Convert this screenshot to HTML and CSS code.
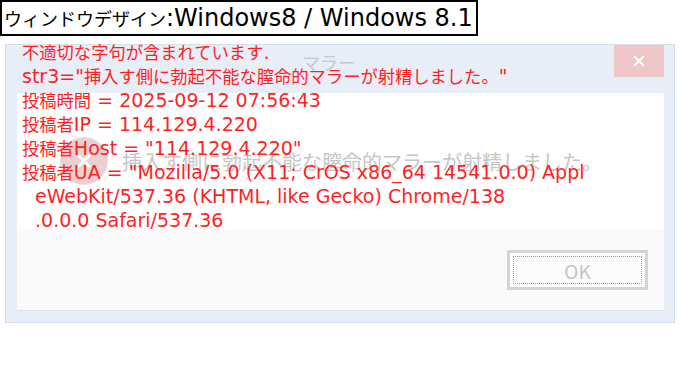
FILE: index.html
```html
<!DOCTYPE html>
<html>
<head>
    <title>ウィンドウデザイン</title>
    <link rel="stylesheet" href="styles.css">
</head>
<body>
    <div class="caption"><span class="ja">ウィンドウデザイン</span>:Windows8 / Windows 8.1</div>

    <div class="window">
        <div class="titlebar">
            <span class="title">マラー</span>
            <span class="close-btn">
                <svg width="14" height="14" viewBox="0 0 14 14">
                    <path d="M2 2 L12 12 M12 2 L2 12" stroke="#fff" stroke-width="2"/>
                </svg>
            </span>
        </div>
        <div class="client">
            <div class="message-row">
                <div class="msg-icon">
                    <svg width="20" height="20" viewBox="0 0 20 20">
                        <path d="M4 4 L16 16 M16 4 L4 16" stroke="#fff" stroke-width="3"/>
                    </svg>
                </div>
                <div class="msg-text">挿入す側に勃起不能な膣命的マラーが射精しました。</div>
            </div>
            <div class="button-row">
                <button class="ok-btn"><span class="focus">OK</span></button>
            </div>
        </div>
    </div>

    <div class="overlay">
        <div><span class="ja">不適切な字句が含まれています</span>.</div>
        <div>str3="<span class="ja">挿入す側に勃起不能な膣命的マラーが射精しました。</span>"</div>
        <div><span class="ja">投稿時間</span> = 2025-09-12 07:56:43</div>
        <div><span class="ja">投稿者</span>IP = 114.129.4.220</div>
        <div><span class="ja">投稿者</span>Host = "114.129.4.220"</div>
        <div><span class="ja">投稿者</span>UA = "Mozilla/5.0 (X11; CrOS x86_64 14541.0.0) Appl</div>
        <div class="indent">eWebKit/537.36 (KHTML, like Gecko) Chrome/138</div>
        <div class="indent">.0.0.0 Safari/537.36</div>
    </div>
</body>
</html>
```

FILE: styles.css
```css
* {
    margin: 0;
    padding: 0;
    box-sizing: border-box;
}

body {
    font-family: "Noto Sans CJK JP", "Noto Sans", sans-serif;
    background: #fff;
    color: #000;
    position: relative;
    width: 680px;
    height: 368px;
    overflow: hidden;
}

.caption {
    display: inline-block;
    border: 2px solid #000;
    padding: 0 3px 0 2px;
    font-family: "DejaVu Sans", "Noto Sans CJK JP", sans-serif;
    font-size: 24px;
    line-height: 32px;
    height: 36px;
    white-space: nowrap;
}

.caption .ja {
    font-family: "Noto Sans CJK JP", sans-serif;
    font-size: 18px;
}

.window {
    margin: 8px 5px 0 5px;
    width: 670px;
    height: 279px;
    background: #e7eef8;
    border: 1px solid #d6dee9;
    display: flex;
    flex-direction: column;
}

.titlebar {
    height: 48px;
    display: flex;
    justify-content: center;
    padding-right: 22px;
    position: relative;
}

.title {
    margin-top: 7px;
    font-size: 18px;
    line-height: 20px;
    color: #c4c8cf;
}

.close-btn {
    position: absolute;
    top: 0;
    right: 10px;
    width: 50px;
    height: 32px;
    background: #efc7c8;
    display: flex;
    align-items: center;
    justify-content: center;
}

.client {
    margin: 0 10px 11px 11px;
    flex: 1;
    display: flex;
    flex-direction: column;
    border-bottom: 1px solid #dde4ee;
}

.message-row {
    background: #fff;
    height: 136px;
    display: flex;
    align-items: center;
    padding: 0 0 0 43px;
    gap: 14px;
}

.msg-icon {
    width: 48px;
    height: 48px;
    border-radius: 50%;
    background: #ead0d1;
    border: 1px solid #e0e0e0;
    display: flex;
    align-items: center;
    justify-content: center;
}

.msg-text {
    font-size: 20px;
    color: #c6c6c6;
    white-space: nowrap;
}

.button-row {
    flex: 1;
    background: #fafafa;
    display: flex;
    justify-content: flex-end;
    align-items: flex-start;
    padding: 21px 16px 0 0;
}

.ok-btn {
    width: 141px;
    height: 40px;
    background: #fcfcfc;
    border: 3px solid #d4d4d4;
    padding: 3px;
    font-family: inherit;
}

.focus {
    display: flex;
    align-items: center;
    justify-content: center;
    height: 100%;
    border: 1px dotted #9a9a9a;
    font-size: 19px;
    color: #c4c4c4;
}

.overlay {
    position: absolute;
    left: 22px;
    top: 40px;
    font-family: "DejaVu Sans", "Noto Sans CJK JP", sans-serif;
    font-size: 19px;
    line-height: 24px;
    color: #ff1f1f;
    white-space: nowrap;
}

.overlay .ja {
    font-family: "Noto Sans CJK JP", sans-serif;
    font-size: 17.3px;
}

.overlay .indent {
    padding-left: 13px;
}
```
